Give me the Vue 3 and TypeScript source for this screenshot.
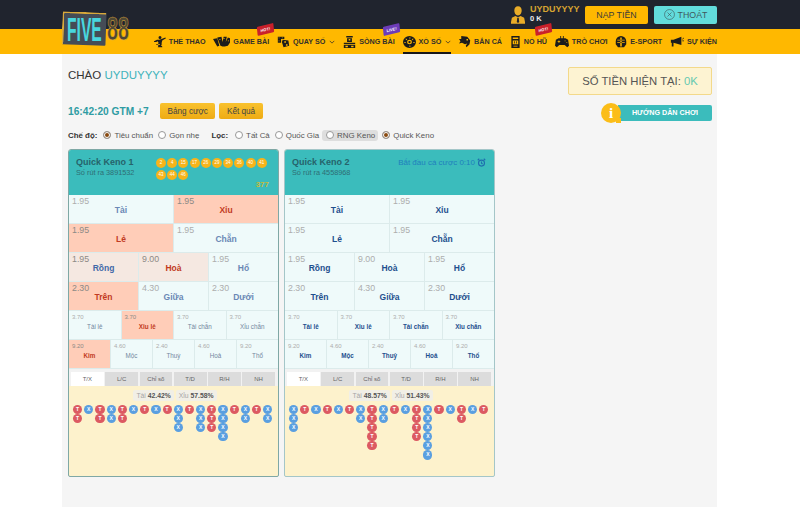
<script setup lang="ts">
interface NavItem {
  label: string
  icon: string
  width: number
  chevron?: boolean
  active?: boolean
  badge?: 'hot' | 'live'
}

interface Cell {
  odds: string
  label: string
  state?: 'on' | 'soft' | 'softOn'
}

interface Keno {
  name: string
  draw: string
  balls?: number[]
  score?: string
  countdown?: string
  rows: Cell[][]
  tai: string
  xiu: string
  road: string[]
}

const navItems: NavItem[] = [
  { label: 'THỂ THAO', width: 12, icon: 'M8 0a2 2 0 1 1 0 4 2 2 0 0 1 0-4zM15 2l1 1-5 3-1 4 1 1-2 1 2 2v1H5l1-2-1-1 1-3-1-2-2 1H0V7l4-2 3 0 3-1zM3 11h5v1H3z' },
  { label: 'GAME BÀI', width: 17, badge: 'hot', icon: 'M0 4l4-1 2 10-2 1zM4 2l4-1 1 7 1-7 3 0-1 7 2-6 4 2-4 9-3 1-2 0-2-1zM6 4v1h1V4zM10 3v1h1V3zM14 6v1h1V6z' },
  { label: 'QUAY SỐ', width: 13, chevron: true, icon: 'M1 1h8v3H5v5H1zM2 2v1h1V2zM6 2v1h1V2zM2 6v1h1V6zM7 5l7 1 1 7-7 2-2-7zM9 7v2h2V7zM11 11v2h2v-2z' },
  { label: 'SÒNG BÀI', width: 13, badge: 'live', icon: 'M4 0h8v2H4zM5 3h6v5H5zM7 4v2h2V4zM1 9h14v2H1zM1 12h14v4H1zM3 13v2h3v-2zM10 13v2h3v-2z' },
  { label: 'XỔ SỐ', width: 13, chevron: true, active: true, icon: 'M8 0a8 8 0 1 1 0 16A8 8 0 0 1 8 0zM8 1.500v2h1v-2zM3 4l1.500 1.500.7-.7L3.700 3.300zM13 4l-.7-.7-1.500 1.500.7.700zM1.500 8v1h2V8zM12.500 8v1h2V8zM8 5a3 3 0 1 0 0 6 3 3 0 0 0 0-6zM8 12.500v2h1v-2zM8 6.500a1.500 1.500 0 1 1 0 3 1.500 1.500 0 0 1 0-3z' },
  { label: 'BẮN CÁ', width: 12, icon: 'M3 0l8 1 4 5-1 5-4 4-1-2 2-3-3 1-4-2-4 1 2-3-2-3 3 0zM10 4v2h2V4z' },
  { label: 'NỔ HŨ', width: 11, badge: 'hot', icon: 'M2 0h12v16H2zM4 2v2h8V2zM4 6v5h8V6zM6 7h1v3H6zM9 7h1v3H9zM5 13v1h6v-1z' },
  { label: 'TRÒ CHƠI', width: 14, icon: 'M4 3h8l3 2 1 8-2 2-3-3H5l-3 3-2-2 1-8zM4 6v1H3v1h1v1h1V8h1V7H5V6zM11 6v1h1V6zM13 8v1h1V8zM6 0h1v3H6zM9 0h1v3H9z' },
  { label: 'E-SPORT', width: 12, icon: 'M8 0a7 7 0 0 1 7 7v4l-3 4H4l-3-4V7a7 7 0 0 1 7-7zM3 5v1h10V5zM3 8v1h10V8zM7 2v12h2V2z' },
  { label: 'SỰ KIỆN', width: 14, icon: 'M1 5h3l9-4v11L4 9v5H2V9H1zM14 4l2-2v1l-2 2zM14 6h2v1h-2z' },
]

const filters = [
  { label: 'Tất Cả' },
  { label: 'Quốc Gia' },
  { label: 'RNG Keno', pill: true },
  { label: 'Quick Keno', checked: true },
]

const tabs = ['T/X', 'L/C', 'Chỉ số', 'T/D', 'R/H', 'NH']

const labels = [
  ['Tài', 'Xỉu'],
  ['Lẻ', 'Chẵn'],
  ['Rồng', 'Hoà', 'Hổ'],
  ['Trên', 'Giữa', 'Dưới'],
  ['Tài lẻ', 'Xỉu lẻ', 'Tài chẵn', 'Xỉu chẵn'],
  ['Kim', 'Mộc', 'Thuỷ', 'Hoả', 'Thổ'],
]
const odds = [
  ['1.95', '1.95'],
  ['1.95', '1.95'],
  ['1.95', '9.00', '1.95'],
  ['2.30', '4.30', '2.30'],
  ['3.70', '3.70', '3.70', '3.70'],
  ['9.20', '4.60', '2.40', '4.60', '9.20'],
]

function buildRows(states: Record<string, Cell['state']>): Cell[][] {
  return labels.map((row, r) =>
    row.map((label, c) => ({ label, odds: odds[r][c], state: states[label] })),
  )
}

const games: Keno[] = [
  {
    name: 'Quick Keno 1',
    draw: 'Số rút ra 3891532',
    balls: [2, 4, 15, 17, 26, 29, 34, 36, 40, 41, 43, 44, 46],
    score: '377',
    rows: buildRows({
      Xỉu: 'on', Lẻ: 'on', Rồng: 'soft', Hoà: 'softOn', Trên: 'on', 'Xỉu lẻ': 'on', Kim: 'on',
    }),
    tai: '42.42%',
    xiu: '57.58%',
    road: ['TT', 'X', 'TT', 'XX', 'TT', 'X', 'T', 'X', 'T', 'XXX', 'T', 'XXX', 'TTT', 'XXXX', 'T', 'XX', 'T', 'XX'],
  },
  {
    name: 'Quick Keno 2',
    draw: 'Số rút ra 4558968',
    countdown: 'Bắt đầu cá cược 0:10',
    rows: buildRows({}),
    tai: '48.57%',
    xiu: '51.43%',
    road: ['XXX', 'T', 'X', 'T', 'X', 'T', 'XX', 'TTTTT', 'XX', 'T', 'X', 'TTTT', 'XXXXXX', 'T', 'X', 'TT', 'X', 'T'],
  },
]
</script>

<template>
  <div class="site">
    <a class="logo">
      <span class="logo-plate" />
      <span class="logo-five">FIVE</span>
      <span class="logo-88">88</span>
    </a>

    <header class="topbar">
      <svg class="user-icon" viewBox="0 0 16 20">
        <path d="M8 0c2.800 0 4.200 2 4.200 4.800S10.600 10.500 8 10.500 3.800 7.600 3.800 4.800 5.200 0 8 0zM5 11l3 1.500L11 11l4 2 1 5v2H0v-2l1-5zM7.200 13l-.6 5 1.400 1 1.400-1-.6-5z" />
      </svg>
      <div class="user-text">
        <div class="user-name">UYDUYYYY</div>
        <div class="user-money">0 K</div>
      </div>
      <button class="top-btn deposit">NẠP TIỀN</button>
      <button class="top-btn logout">
        <svg viewBox="0 0 12 12" width="11" height="11">
          <circle cx="6" cy="6" r="5.400" />
          <path d="M3.800 3.800l4.400 4.400M8.200 3.800l-4.400 4.400" />
        </svg>
        THOÁT
      </button>
    </header>

    <nav class="nav">
      <div
        v-for="item in navItems"
        :key="item.label"
        class="nav-item"
        :class="{ active: item.active }"
      >
        <svg
          class="nav-icon"
          viewBox="0 0 16 16"
          :style="{ width: item.width + 'px' }"
          preserveAspectRatio="none"
        >
          <path fill-rule="evenodd" :d="item.icon" />
        </svg>
        <span>{{ item.label }}</span>
        <svg v-if="item.chevron" class="chevron" viewBox="0 0 8 5">
          <path d="M1 1l3 3 3-3" />
        </svg>
        <span v-if="item.badge" class="badge" :class="item.badge">{{ item.badge === 'hot' ? 'HOT!' : 'LIVE!' }}</span>
      </div>
    </nav>

    <main class="page">
      <section class="summary">
        <div class="summary-left">
          <h1 class="greeting">CHÀO <span>UYDUYYYY</span></h1>
          <div class="time-row">
            <strong class="clock">16:42:20 GTM +7</strong>
            <button class="gold-btn first">Bảng cược</button>
            <button class="gold-btn">Kết quả</button>
          </div>
          <div class="filter-row">
            <b>Chế độ:</b>
            <label class="radio"><i class="checked" />Tiêu chuẩn</label>
            <label class="radio"><i />Gọn nhẹ</label>
            <b class="filter-title">Lọc:</b>
            <label
              v-for="f in filters"
              :key="f.label"
              class="radio"
              :class="{ pill: f.pill }"
            ><i :class="{ checked: f.checked }" />{{ f.label }}</label>
          </div>
        </div>
        <div class="summary-right">
          <div class="balance">SỐ TIỀN HIỆN TẠI: <span>0K</span></div>
          <div class="guide">
            <span class="guide-dot">i</span>
            <span class="guide-bar">HƯỚNG DẪN CHƠI</span>
          </div>
        </div>
      </section>

      <section class="cards">
        <article v-for="game in games" :key="game.name" class="card">
          <div class="card-head">
            <div>
              <div class="card-name">{{ game.name }}</div>
              <div class="card-draw">{{ game.draw }}</div>
            </div>
            <div v-if="game.balls" class="balls-box">
              <div class="balls">
                <span v-for="n in game.balls" :key="n" class="ball">{{ n }}</span>
              </div>
              <div class="score">{{ game.score }}</div>
            </div>
            <div v-else class="countdown">
              {{ game.countdown }}
              <svg viewBox="0 0 12 12" width="9" height="9">
                <circle cx="6" cy="6.800" r="4" />
                <path d="M6 4.500v2.500l1.500 1M1 3l2-2M11 3L9 1" />
              </svg>
            </div>
          </div>

          <div
            v-for="(row, r) in game.rows"
            :key="r"
            class="bet-row"
            :class="{ small: r > 3 }"
          >
            <div
              v-for="cell in row"
              :key="cell.label"
              class="bet"
              :class="cell.state"
            >
              <span class="odds">{{ cell.odds }}</span>
              <span class="bet-label">{{ cell.label }}</span>
            </div>
          </div>

          <div class="tabs">
            <span
              v-for="(tab, t) in tabs"
              :key="tab"
              class="tab"
              :class="{ current: t === 0 }"
            >{{ tab }}</span>
          </div>

          <div class="road-box">
            <div class="percents">
              <span>Tài <b>{{ game.tai }}</b></span>
              <span>Xỉu <b>{{ game.xiu }}</b></span>
            </div>
            <div class="road">
              <div v-for="(col, c) in game.road" :key="c" class="road-col">
                <span
                  v-for="(bead, b) in col.split('')"
                  :key="b"
                  class="bead"
                  :class="bead === 'T' ? 'tai' : 'xiu'"
                >{{ bead }}</span>
              </div>
            </div>
          </div>
        </article>
      </section>
    </main>
  </div>
</template>

<style scoped>
.site {
  position: relative;
  width: 800px;
  height: 507px;
  overflow: hidden;
  background: #fff;
  font-family: "Liberation Sans", Arial, sans-serif;
  color: #333;
}

.logo {
  position: absolute;
  left: 62px;
  top: 12px;
  z-index: 5;
  width: 68px;
  height: 34px;
}

.logo-plate {
  position: absolute;
  left: 0;
  top: 0;
  width: 44px;
  height: 33px;
  box-sizing: border-box;
  background: #454c56;
  border-top: 2px solid #d9a93a;
  border-left: 2px solid #d9a93a;
  border-radius: 1px;
  transform: rotate(2deg);
}

.logo-five,
.logo-88 {
  position: absolute;
  font-weight: 700;
  transform-origin: left center;
  white-space: nowrap;
}

.logo-five {
  left: 5px;
  top: 1px;
  font-size: 34px;
  line-height: 32px;
  color: #48d6de;
  transform: scaleX(0.46);
}

.logo-88 {
  left: 45px;
  top: 3px;
  font-size: 33px;
  line-height: 28px;
  color: #4f4834;
  transform: scaleX(0.6);
  -webkit-text-stroke: 0.6px #e3b23c;
}

.topbar {
  display: flex;
  align-items: center;
  justify-content: flex-end;
  height: 29px;
  padding-right: 83px;
  background: #20242e;
}

.user-icon {
  width: 14px;
  height: 18px;
  fill: #e9ac28;
  margin-right: 5px;
}

.user-text {
  width: 55px;
  padding-bottom: 3px;
  font-weight: 700;
}

.user-name {
  font-size: 9px;
  line-height: 10px;
  color: #d6a431;
}

.user-money {
  font-size: 7.500px;
  line-height: 9px;
  color: #eee;
}

.top-btn {
  display: flex;
  align-items: center;
  justify-content: center;
  gap: 3px;
  width: 63px;
  height: 18px;
  margin-left: 6px;
  padding: 0;
  border: 0;
  border-radius: 2px;
  font-family: inherit;
  font-size: 8.800px;
  color: #3a3a3a;
}

.deposit {
  margin-left: 0;
  background: #ffb800;
}

.logout {
  background: #62dcdc;
  color: #40595c;
}

.logout svg {
  fill: none;
  stroke: #40595c;
  stroke-width: 0.7;
}

.nav {
  display: flex;
  justify-content: flex-end;
  gap: 7.800px;
  height: 25px;
  padding-right: 83px;
  background: #ffb800;
}

.nav-item {
  position: relative;
  display: flex;
  align-items: center;
  gap: 3px;
  height: 25px;
  font-size: 7.200px;
  font-weight: 700;
  color: #33302a;
  white-space: nowrap;
}

.nav-item.active::after {
  content: "";
  position: absolute;
  left: 0;
  right: 0;
  bottom: 0;
  height: 2px;
  background: #17171a;
}

.nav-icon {
  height: 12px;
  fill: #1c1c1c;
}

.chevron {
  width: 6px;
  height: 4px;
  margin-left: 1px;
  fill: none;
  stroke: #33302a;
  stroke-width: 1;
}

.badge {
  position: absolute;
  top: -4px;
  right: -5px;
  padding: 1.500px 3.500px;
  font-size: 4px;
  line-height: 6px;
  color: #fff;
  border-radius: 1px;
  transform: rotate(-14deg) skewX(-8deg);
}

.badge.hot {
  background: #c9202a;
}

.badge.live {
  background: #6d3cb8;
}

.page {
  width: 655px;
  height: 453px;
  margin-left: 62px;
  padding: 13px 5px 0 6px;
  box-sizing: border-box;
  background: #f5f5f5;
}

.summary {
  display: flex;
  justify-content: space-between;
  height: 82px;
}

.greeting {
  margin: 0;
  font-size: 11.500px;
  font-weight: 400;
  line-height: 16px;
  color: #333;
}

.greeting span {
  color: #3fb3bb;
}

.time-row {
  display: flex;
  align-items: center;
  margin-top: 20px;
  height: 16px;
}

.clock {
  width: 92px;
  font-size: 10.200px;
  color: #2f9ca3;
}

.gold-btn {
  height: 16px;
  padding: 0 7.500px;
  margin-left: 4px;
  border: 0;
  border-radius: 2px;
  background: linear-gradient(#f9c22e, #eeab14);
  font-family: inherit;
  font-size: 8.200px;
  color: #444;
}

.gold-btn.first {
  margin-left: 0;
}

.filter-row {
  display: flex;
  align-items: center;
  margin-top: 9px;
  height: 14px;
  font-size: 7.900px;
  color: #555;
  white-space: nowrap;
}

.filter-row b {
  color: #333;
  margin-right: 6px;
}

.filter-row .filter-title {
  margin-left: 7px;
  margin-right: 7px;
}

.radio {
  display: flex;
  align-items: center;
  gap: 3px;
  margin-right: 5px;
}

.radio i {
  display: block;
  width: 8px;
  height: 8px;
  box-sizing: border-box;
  border: 0.5px solid #999;
  border-radius: 50%;
  background: #fff;
}

.radio i.checked {
  background: #8a4a10;
  box-shadow: inset 0 0 0 1px #fff;
}

.radio.pill {
  padding: 1px 3px 1px 4px;
  margin: 0 4px 0 -2px;
  background: #dedede;
  border-radius: 3px;
}

.summary-right {
  display: flex;
  flex-direction: column;
  align-items: flex-end;
}

.balance {
  width: 144px;
  height: 28px;
  box-sizing: border-box;
  border: 1px solid #f3d98a;
  border-radius: 2px;
  background: #fdf3d2;
  font-size: 11.300px;
  line-height: 26px;
  text-align: center;
  color: #555;
}

.balance span {
  color: #66c9b0;
}

.guide {
  display: flex;
  align-items: center;
  margin-top: 8px;
  width: 111px;
}

.guide-dot {
  position: relative;
  z-index: 1;
  width: 20px;
  height: 20px;
  border-radius: 50%;
  background: #fbbd18;
  color: #fff;
  font-family: "Liberation Serif", serif;
  font-size: 15px;
  font-weight: 700;
  line-height: 20px;
  text-align: center;
}

.guide-dot::after {
  content: "";
  position: absolute;
  right: 0;
  bottom: 0;
  width: 5px;
  height: 5px;
  background: #fbbd18;
}

.guide-bar {
  flex: 1;
  height: 16px;
  margin-left: -3px;
  border-radius: 0 2px 2px 0;
  background: #3bbcbc;
  color: #fff;
  font-size: 7.200px;
  font-weight: 700;
  line-height: 16px;
  text-align: center;
}

.cards {
  display: flex;
  gap: 5px;
}

.card {
  width: 211px;
  height: 328px;
  box-sizing: border-box;
  border: 1px solid #7fa8a5;
  border-radius: 3px 3px 2px 2px;
  overflow: hidden;
  background: #fdf2cc;
}

.card:last-child {
  border-color: #a4c6c8;
}

.card-head {
  display: flex;
  justify-content: space-between;
  height: 45px;
  padding: 7px 8px 0 7px;
  box-sizing: border-box;
  background: #3bbcbc;
}

.card-name {
  font-size: 9px;
  font-weight: 700;
  line-height: 10px;
  color: #26636b;
}

.card-draw {
  margin-top: 2px;
  font-size: 7.300px;
  line-height: 8px;
  color: #2f6e74;
}

.balls-box {
  width: 114px;
  padding-top: 1px;
}

.balls {
  display: flex;
  flex-wrap: wrap;
  gap: 2px 1.200px;
}

.ball {
  width: 10px;
  height: 10px;
  border-radius: 50%;
  background: #f7b41a;
  color: #fff;
  font-size: 4.500px;
  line-height: 10px;
  text-align: center;
}

.score {
  padding-right: 1px;
  font-size: 8px;
  font-weight: 700;
  line-height: 10px;
  text-align: right;
  color: #c4bb3c;
}

.countdown {
  display: flex;
  align-items: center;
  gap: 2px;
  height: 10px;
  font-size: 8px;
  color: #1f7fbd;
}

.countdown svg {
  fill: none;
  stroke: #1f6fae;
  stroke-width: 1.500;
}

.bet-row {
  display: flex;
  height: 29px;
}

.bet {
  position: relative;
  flex: 1 1 0;
  min-width: 0;
  padding: 1px 0 0 3px;
  box-sizing: border-box;
  background: #effafa;
  border-right: 1px solid #dcebeb;
  border-bottom: 1px solid #dcebeb;
  text-align: center;
}

.bet:last-child {
  border-right: 0;
}

.odds {
  display: block;
  font-size: 8.800px;
  line-height: 10px;
  text-align: left;
  color: #adadad;
}

.bet-label {
  display: block;
  margin-top: -2px;
  padding-right: 3px;
  font-size: 8.500px;
  font-weight: 700;
  line-height: 12px;
  color: #1e4f8e;
}

.card:first-child .bet-label {
  color: #6a88b5;
}

.card:first-child .bet.on .bet-label,
.card:first-child .bet.softOn .bet-label {
  color: #c23a22;
}

.card:first-child .bet.soft .bet-label {
  color: #3f68a8;
}

.card:first-child .small .bet:not(.on) .bet-label {
  font-weight: 400;
  color: #73889f;
}

.bet.on {
  background: #ffcdb8;
}

.bet.soft,
.bet.softOn {
  background: #f5e8e1;
}

.bet.on .odds,
.bet.soft .odds,
.bet.softOn .odds {
  color: #8d8a86;
}

.small .odds {
  font-size: 6px;
  line-height: 9px;
  padding-top: 1px;
}

.small .bet-label {
  font-size: 6.300px;
  line-height: 11px;
  margin-top: -1px;
}

.tabs {
  display: flex;
  gap: 1.500px;
  height: 17px;
  padding: 3px 3px 0 2px;
  box-sizing: border-box;
  background: #f2f2f2;
}

.tab {
  flex: 1;
  background: #dcdcdc;
  font-size: 6px;
  line-height: 14px;
  text-align: center;
  color: #666;
}

.tab.current {
  background: #fff;
}

.road-box {
  padding-top: 4px;
  background: #fdf2cc;
}

.percents {
  display: flex;
  justify-content: center;
  gap: 2px;
  padding-left: 3px;
  height: 11px;
}

.percents span {
  padding: 0 3px;
  border-radius: 2px;
  background: #f1efe6;
  font-size: 6.800px;
  line-height: 11px;
  color: #a5a5a5;
}

.percents b {
  color: #555;
}

.road {
  display: grid;
  grid-template-columns: repeat(18, 11.200px);
  margin: 3.500px 0 0 4px;
}

.road-col {
  display: flex;
  flex-direction: column;
  gap: 0;
}

.bead {
  width: 9.200px;
  height: 9.200px;
  border-radius: 50%;
  font-size: 5px;
  font-weight: 700;
  line-height: 9.200px;
  text-align: center;
  color: #fff;
}

.bead.tai {
  background: #dc5a62;
}

.bead.xiu {
  background: #5a9fe0;
}
</style>

<style>
html,
body {
  margin: 0;
  overflow: hidden;
}
</style>
